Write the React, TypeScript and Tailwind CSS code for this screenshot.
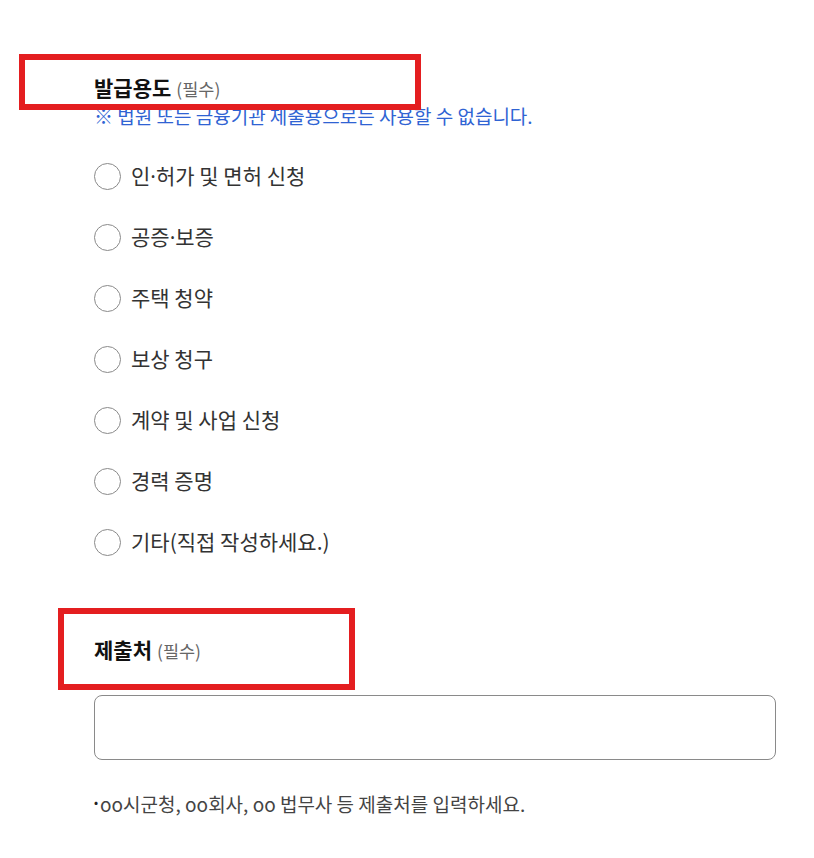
import React from 'react';

const Dot = () => <span className="font-['Noto_Sans',sans-serif]">·</span>;

const purposes: { key: string; label: React.ReactNode }[] = [
  { key: 'license', label: <>인<Dot />허가 및 면허 신청</> },
  { key: 'notary', label: <>공증<Dot />보증</> },
  { key: 'housing', label: '주택 청약' },
  { key: 'claim', label: '보상 청구' },
  { key: 'contract', label: '계약 및 사업 신청' },
  { key: 'career', label: '경력 증명' },
  { key: 'etc', label: '기타(직접 작성하세요.)' },
];

export default function App() {
  return (
    <div className="relative min-h-[858px] w-[814px] bg-white font-['Noto_Sans_CJK_KR','Noto_Sans',sans-serif] text-[#222]">
      <div className="pl-[94px] pr-[38px] pt-[72px]">
        {/* 발급용도 */}
        <div className="text-[21px] leading-[30px]">
          <span className="font-bold text-[#111]">발급용도</span>
          <span className="ml-[5px] text-[17.5px] text-[#666]">(필수)</span>
        </div>
        <p className="text-[19px] leading-[24px] text-[#2f63d3]">
          ※ 법원 또는 금융기관 제출용으로는 사용할 수 없습니다.
        </p>

        <div className="mt-[34px] flex flex-col gap-[33px]">
          {purposes.map((p) => (
            <label key={p.key} className="flex h-[28px] items-center gap-[10px] cursor-pointer">
              <span className="h-[27px] w-[27px] shrink-0 rounded-full border border-[#8a8a8a] bg-white" />
              <span className="text-[21px] text-[#333]">{p.label}</span>
            </label>
          ))}
        </div>

        {/* 제출처 */}
        <div className="mt-[78px] text-[21px] leading-[30px]">
          <span className="font-bold text-[#111]">제출처</span>
          <span className="ml-[5px] text-[17.5px] text-[#666]">(필수)</span>
        </div>
        <input
          type="text"
          className="mt-[29px] block h-[65px] w-full rounded-[8px] border border-[#8a8a8a] px-4 text-[18px] outline-none"
        />
        <p className="mt-[29px] text-[19px] leading-[26px] text-[#444]">
          <span className="mr-[2px] align-[5px] text-[12px] text-[#222]">•</span>oo시군청, oo회사, oo 법무사 등 제출처를 입력하세요.
        </p>
      </div>

      <div className="absolute left-[19px] top-[54px] h-[56px] w-[402px] border-[6px] border-[#e41e20]" />
      <div className="absolute left-[58px] top-[608px] h-[82px] w-[297px] border-[6px] border-[#e41e20]" />
    </div>
  );
}
